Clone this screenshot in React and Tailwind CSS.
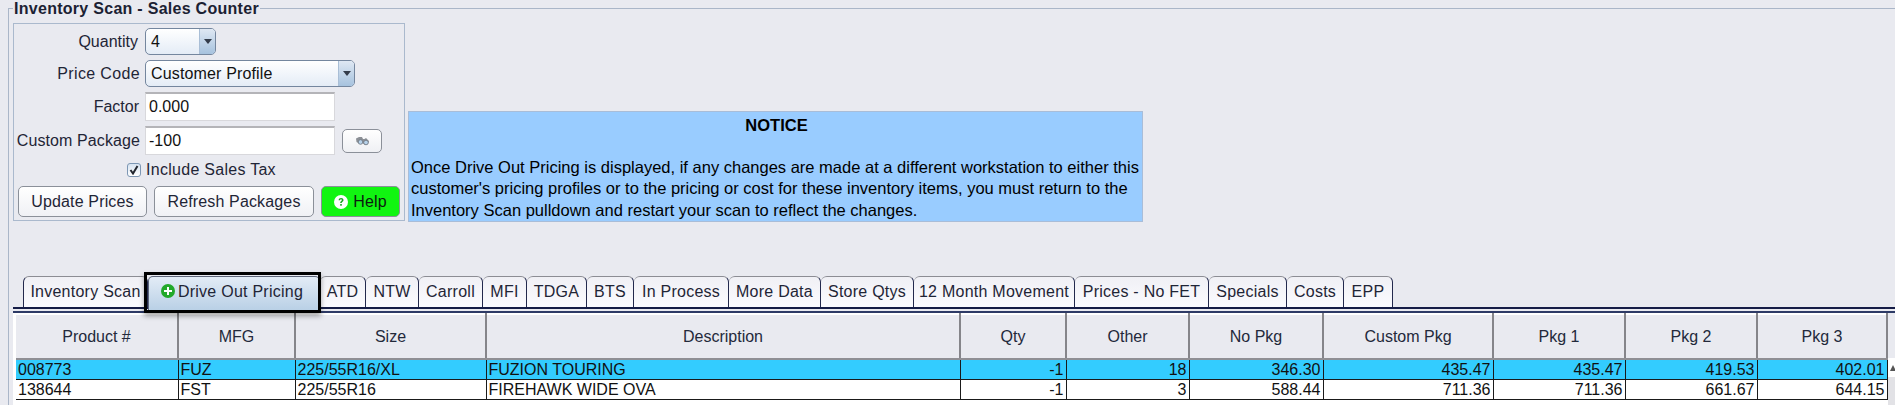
import React from "react";

const tabs = [
  ["Inventory Scan", "w-[125px]"],
  ["Drive Out Pricing", "w-[172px]"],
  ["ATD", "w-[46px]"],
  ["NTW", "w-[53px]"],
  ["Carroll", "w-[64px]"],
  ["MFI", "w-[44px]"],
  ["TDGA", "w-[60px]"],
  ["BTS", "w-[47px]"],
  ["In Process", "w-[95px]"],
  ["More Data", "w-[92px]"],
  ["Store Qtys", "w-[93px]"],
  ["12 Month Movement", "w-[161px]"],
  ["Prices - No FET", "w-[134px]"],
  ["Specials", "w-[78px]"],
  ["Costs", "w-[57px]"],
  ["EPP", "w-[49px]"],
];

const cols = [
  ["Product #", 162],
  ["MFG", 117],
  ["Size", 191],
  ["Description", 474],
  ["Qty", 106],
  ["Other", 123],
  ["No Pkg", 134],
  ["Custom Pkg", 170],
  ["Pkg 1", 132],
  ["Pkg 2", 132],
  ["Pkg 3", 130],
];

const rows = [
  ["008773", "FUZ", "225/55R16/XL", "FUZION TOURING", "-1", "18", "346.30", "435.47", "435.47", "419.53", "402.01"],
  ["138644", "FST", "225/55R16", "FIREHAWK WIDE OVA", "-1", "3", "588.44", "711.36", "711.36", "661.67", "644.15"],
];

function Combo({ value, width }) {
  return (
    <div className={`flex h-[27px] ${width} overflow-hidden rounded-[5px] border border-[#74869e] bg-gradient-to-b from-white to-[#e4ecf6]`}>
      <span className="flex-1 pl-[5px] text-[16px] leading-[25px] tracking-[0.15px] text-[#111]">{value}</span>
      <span className="flex w-[16px] items-center justify-center border-l border-[#a9bed6] bg-gradient-to-b from-[#dfe8f3] to-[#a6c2de]">
        <svg width="8" height="5" viewBox="0 0 8 5"><path d="M0 0h8L4 5z" fill="#333c4a" /></svg>
      </span>
    </div>
  );
}

function Field({ value }) {
  return (
    <div className="h-[29px] w-[190px] border border-t-2 border-[#d8d8dc] border-t-[#b4b4b8] bg-white pl-[3px] text-[16px] leading-[26px] text-[#111]">
      {value}
    </div>
  );
}

function Btn({ children, className }) {
  return (
    <button className={`flex h-[31px] items-center justify-center rounded-[5px] border border-[#8b9099] text-[16px] tracking-[0.15px] text-[#1f2536] ${className}`}>
      {children}
    </button>
  );
}

function PlusIcon() {
  return (
    <svg width="14" height="14" viewBox="0 0 14 14" className="mr-[3px] mt-[-2px]">
      <circle cx="7" cy="7" r="7" fill="#22a92a" />
      <path d="M6 3h2v3h3v2H8v3H6V8H3V6h3z" fill="#fff" />
    </svg>
  );
}

function HelpIcon() {
  return (
    <svg width="14" height="14" viewBox="0 0 14 14" className="mr-[5px]">
      <circle cx="7" cy="7" r="7" fill="#fff" />
      <path d="M4.6 5.3C4.7 3.9 5.7 3 7.1 3c1.4 0 2.4.9 2.4 2 0 1-.6 1.5-1.2 1.9-.5.4-.6.6-.6 1.2H6.2c0-1 .2-1.4.9-1.9.5-.4.8-.7.8-1.1 0-.5-.4-.8-.9-.8-.6 0-.9.4-1 1z" fill="#13a51b" />
      <rect x="6.2" y="9" width="1.6" height="1.7" fill="#13a51b" />
    </svg>
  );
}

function Binoculars() {
  return (
    <svg width="15" height="10" viewBox="0 0 15 10">
      <path d="M1 2.5 4 1h3l1 2h1.5L11 2l3 3-1 3-3 1-2.5-2L5 8 1.5 6z" fill="#8b8f95" />
      <circle cx="5.5" cy="6" r="2.3" fill="#b7d2ea" stroke="#6e7680" strokeWidth="0.8" />
      <circle cx="11" cy="6.5" r="2.3" fill="#b7d2ea" stroke="#6e7680" strokeWidth="0.8" />
    </svg>
  );
}

export default function App() {
  return (
    <div
      className="h-[405px] w-full overflow-hidden bg-[#e9eaf0] text-[#1f2536]"
      style={{ fontFamily: '"Liberation Sans", Arial, sans-serif' }}
    >
      <fieldset className="ml-[8px] h-[405px] border-l border-t border-[#aab6c8]">
        <legend className="ml-[4px] px-px text-[16px] font-bold leading-[17px] tracking-[0.28px] text-[#1b2133]">
          Inventory Scan - Sales Counter
        </legend>

        <div className="ml-[4px] mt-[6px] flex items-start">
          <div className="h-[198px] w-[392px] border border-[#aab9cd] pt-[4px]">
            <div className="flex items-center">
              <label className="w-[124px] text-right text-[16px]">Quantity</label>
              <span className="w-[7px]" />
              <Combo value="4" width="w-[71px]" />
            </div>
            <div className="mt-[5px] flex items-center">
              <label className="w-[126px] text-right text-[16px] tracking-[0.35px]">Price Code</label>
              <span className="w-[5px]" />
              <Combo value="Customer Profile" width="w-[210px]" />
            </div>
            <div className="mt-[5px] flex items-center">
              <label className="w-[125px] text-right text-[16px]">Factor</label>
              <span className="w-[6px]" />
              <Field value="0.000" />
            </div>
            <div className="mt-[5px] flex items-center">
              <label className="w-[126px] whitespace-nowrap text-right text-[16px] tracking-[0.1px]">Custom Package</label>
              <span className="w-[5px]" />
              <Field value="-100" />
              <Btn className="ml-[7px] !h-[24px] w-[40px] bg-gradient-to-b from-white to-[#eff0f4]">
                <Binoculars />
              </Btn>
            </div>
            <div className="ml-[113px] mt-[8px] flex h-[14px] items-center">
              <span className="flex h-[14px] w-[14px] items-center justify-center rounded-[3px] border border-[#7d97b4] bg-gradient-to-b from-[#d7e3f0] to-white">
                <svg width="10" height="10" viewBox="0 0 10 10">
                  <path d="M1.5 5 4 8.5 8.5 1" fill="none" stroke="#23272f" strokeWidth="2" />
                </svg>
              </span>
              <span className="ml-[5px] text-[16px] tracking-[0.28px]">Include Sales Tax</span>
            </div>
            <div className="ml-[4px] mt-[9px] flex gap-[7px]">
              <Btn className="w-[129px] bg-gradient-to-b from-white to-[#f0f1f5]">Update Prices</Btn>
              <Btn className="w-[160px] bg-gradient-to-b from-white to-[#f0f1f5]">Refresh Packages</Btn>
              <Btn className="w-[79px] bg-[#11f511] !text-[#0c1a10]"><HelpIcon />Help</Btn>
            </div>
          </div>

          <div className="ml-[3px] mt-[88px] h-[111px] w-[735px] border border-[#a9bdd8] bg-[#99ccff] pl-[2px] pt-[3px] text-[16.5px] leading-[21.5px] text-black">
            <div className="text-center font-bold">NOTICE</div>
            <div className="mt-[20px] whitespace-nowrap">
              Once Drive Out Pricing is displayed, if any changes are made at a different workstation to either this
              <br />
              customer's pricing profiles or to the pricing or cost for these inventory items, you must return to the
              <br />
              Inventory Scan pulldown and restart your scan to reflect the changes.
            </div>
          </div>
        </div>

        <div className="ml-[4px] mt-[54px]">
          <div className="ml-[10px] flex h-[31px]">
            {tabs.map(([label, w], i) =>
              i === 1 ? (
                <div
                  key={label}
                  className={`relative z-10 flex h-[34px] ${w} items-center justify-center whitespace-nowrap rounded-t-[5px] border border-b-0 border-[#5c6478] bg-gradient-to-b from-[#e3ecf6] to-[#b9d0e6] pb-[4px] pr-[4px] text-[16px] tracking-[0.25px]`}
                >
                  <PlusIcon />
                  {label}
                  <span className="absolute -bottom-[3px] -left-[5px] -right-[2px] -top-[5px] border-[3px] border-black shadow-[0_3px_5px_rgba(0,0,0,0.35)]" />
                </div>
              ) : (
                <div
                  key={label}
                  className={`flex h-[31px] ${w} items-center justify-center whitespace-nowrap rounded-t-[6px] border-r border-t border-[#23294d] border-t-[#8c8d94] bg-gradient-to-b from-[#f0f0f5] to-[#fbfbff] text-[16px] tracking-[0.25px] ${i === 0 ? "border-l" : ""}`}
                >
                  {label}
                </div>
              )
            )}
          </div>
          <div className="h-[6px] border-b-2 border-t-2 border-b-[#2d3a66] border-t-[#151c46] bg-[#e9eaf0]" />

          <div className="flex h-[92px] bg-white pl-[3px]">
            <table className="table-fixed border-collapse self-start" style={{ width: 1871 }}>
              <colgroup>
                {cols.map(([name, w]) => (
                  <col key={name} style={{ width: w }} />
                ))}
              </colgroup>
              <thead>
                <tr>
                  {cols.map(([name]) => (
                    <th
                      key={name}
                      className="h-[45px] border-b-2 border-r-2 border-t-2 border-b-[#8f8f94] border-r-[#85858a] border-t-white bg-[#e9eaf0] p-0 text-[16px] font-normal text-[#23293b]"
                    >
                      {name}
                    </th>
                  ))}
                </tr>
              </thead>
              <tbody>
                {rows.map((row, r) => (
                  <tr key={row[0]} className={r === 0 ? "bg-[#33ccff]" : "bg-white"}>
                    {row.map((cell, c) => (
                      <td
                        key={c}
                        className={`h-[20px] whitespace-nowrap border-b border-r border-[#1a1a1a] p-0 text-[16px] leading-[19px] text-[#111] ${c > 3 ? "pr-[2px] text-right" : "pl-[2px]"}`}
                      >
                        {cell}
                      </td>
                    ))}
                  </tr>
                ))}
              </tbody>
            </table>
            <div className="w-[8px] shrink-0">
              <div className="h-[45px] bg-[#e9eaf0]" />
              <div className="flex h-[19px] items-start justify-start bg-white pl-[2px] pt-[7px]">
                <svg width="6" height="6" viewBox="0 0 6 6"><path d="M3 0 6 6H0z" fill="#555" /></svg>
              </div>
              <div className="h-[28px] bg-[#e2e2e6]" />
            </div>
          </div>
        </div>
      </fieldset>
    </div>
  );
}
